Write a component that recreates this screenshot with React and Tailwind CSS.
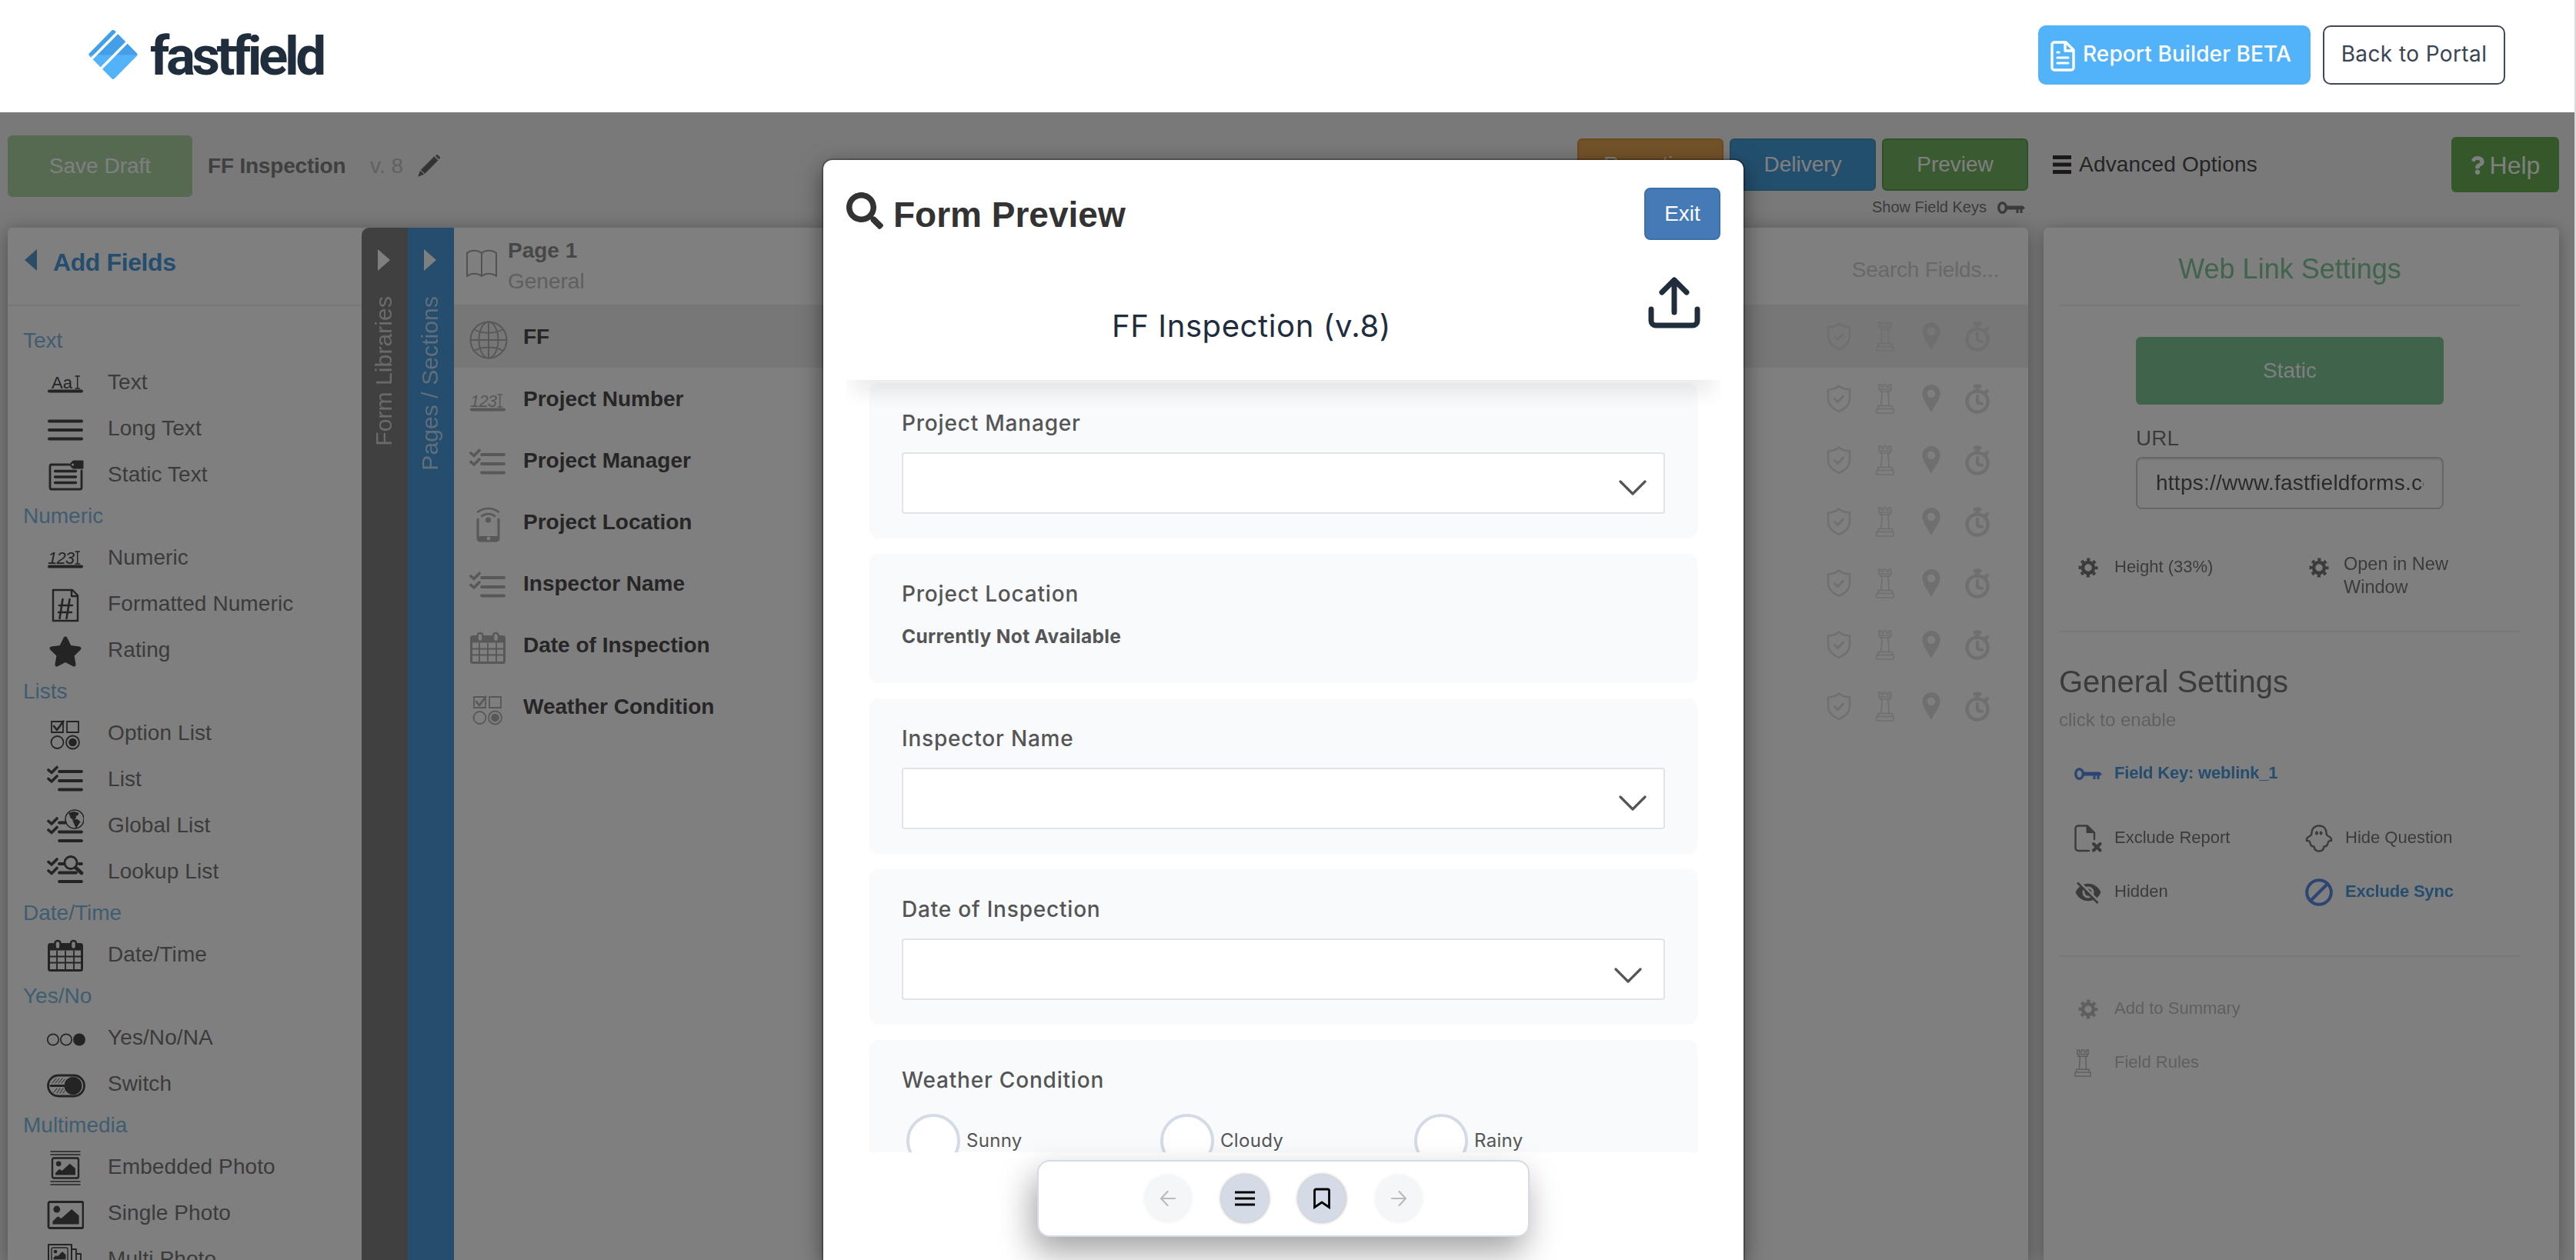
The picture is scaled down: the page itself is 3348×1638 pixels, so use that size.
import React from "react";
import { FaSearch, FaQuestion, FaStar } from "react-icons/fa";
import { MdVisibilityOff } from "react-icons/md";

const Svg = ({ w = 48, h = 48, box, className = "", children }) => (
    <svg width={w} height={h} viewBox={box || `0 0 ${w} ${h}`} className={`shrink-0 ${className}`} fill="none" stroke="currentColor" strokeLinecap="round" strokeLinejoin="round">
        {children}
    </svg>
);

const Cursor = () => <path d="M37 14h2.500M42.500 14H40M39.700 14v15M37 30h2.500M42.500 30H40" strokeWidth="1.500" />;

const Checks = ({ y = 0 }) => (
    <g transform={`translate(0 ${y})`}>
        <path d="M2 10l4 3.500L13 6.500M2 21.500l4 3.500 7-7" strokeWidth="3.600" />
    </g>
);

const Photo = ({ x, y, w, h, s = 3 }) => (
    <g transform={`translate(${x} ${y})`}>
        <rect width={w} height={h} rx="2" strokeWidth={s} />
        <circle cx={w * 0.24} cy={h * 0.28} r={h * 0.13} fill="currentColor" stroke="none" />
        <path d={`M${w * 0.12} ${h * 0.85}V${h * 0.74}L${w * 0.27} ${h * 0.55}l${w * 0.1} ${h * 0.08}L${w * 0.67} ${h * 0.28}L${w * 0.88} ${h * 0.52}V${h * 0.85}z`} fill="currentColor" stroke="none" />
    </g>
);

// iconos de los tipos de campo
const icons = {
    text: (
        <Svg>
            <text x="6" y="29.500" fontSize="22" fill="currentColor" stroke="none" className="font-['Liberation_Sans',Arial,sans-serif]">Aa</text>
            <Cursor />
            <path d="M3 33.500h42" strokeWidth="4" />
        </Svg>
    ),
    longText: (
        <Svg><path d="M3 12.500h42M3 24h42M3 35.500h42" strokeWidth="4" /></Svg>
    ),
    staticText: (
        <Svg>
            <path d="M28 9H6a2 2 0 0 0-2 2v28a2 2 0 0 0 2 2h37a2 2 0 0 0 2-2V17" strokeWidth="2.800" />
            <path d="M10.500 17.500h27M10.500 25h27M10.500 32.500h27" strokeWidth="3.400" />
            <path d="M29 9l5-5h13v10H34z" fill="currentColor" strokeWidth="1" />
            <circle cx="33.500" cy="9" r="1.500" fill="#fff" stroke="none" />
        </Svg>
    ),
    numeric: (
        <Svg>
            <text x="1" y="29.500" fontSize="22" fontStyle="italic" textLength="35" fill="currentColor" stroke="none" className="font-['Liberation_Sans',Arial,sans-serif]">123</text>
            <Cursor />
            <path d="M3 33.500h42" strokeWidth="4" />
        </Svg>
    ),
    formatted: (
        <Svg>
            <path d="M8 4h25l7 7v33H8z" strokeWidth="2.400" strokeLinejoin="miter" />
            <path d="M32 4v8h8" strokeWidth="2.400" />
            <path d="M20.500 16l-4 25M29.500 16l-4 25M16 24h17M15 33h17" strokeWidth="2.600" />
        </Svg>
    ),
    rating: <FaStar className="mx-[2px] size-[44px]" />,
    option: (
        <Svg>
            <path d="M6 7h15v14H6zM26 7h15v14H26z" strokeWidth="1.800" strokeLinejoin="miter" />
            <path d="M9 13l4 5 8.500-11.500" strokeWidth="2.600" />
            <circle cx="13.500" cy="34" r="8" strokeWidth="1.800" />
            <circle cx="33.500" cy="34" r="8.500" strokeWidth="1.800" />
            <circle cx="33.500" cy="34" r="5.300" fill="currentColor" stroke="none" />
        </Svg>
    ),
    list: (
        <Svg>
            <Checks />
            <path d="M16 12h29M16 24h29M16 35.500h29" strokeWidth="3.800" />
        </Svg>
    ),
    globalList: (
        <Svg>
            <Checks y={6.500} />
            <path d="M16 18.500h8M16 30.500h29M16 42h29" strokeWidth="3.800" />
            <circle cx="36" cy="14" r="12" strokeWidth="1.600" />
            <path d="M29 6l6-1.500 6 1.500-1 2.500-3 1 .5 3-3 2-3-2zM34 15l6-.500 3 3-2.500 3.500-2.500 4-2-4.500z" fill="currentColor" strokeWidth="1" />
        </Svg>
    ),
    lookup: (
        <Svg>
            <Checks y={-0.5} />
            <path d="M16 12h6M42 12h3M16 23.500h22M16 35h29" strokeWidth="3.800" />
            <circle cx="31" cy="10.500" r="8" strokeWidth="2.800" />
            <path d="M38 17.500l7 6.500" strokeWidth="4.600" />
        </Svg>
    ),
    date: (
        <Svg>
            <rect x="2.500" y="8.500" width="43" height="34" rx="2" strokeWidth="3" />
            <path d="M2.500 10h43v6.500h-43z" fill="currentColor" stroke="none" />
            <path d="M13 17.500v24M24 17.500v24M35 17.500v24M3 24.500h42M3 32.500h42" strokeWidth="1.800" />
            <rect x="10.500" y="4" width="7" height="11" rx="3.500" fill="#fff" strokeWidth="2.600" />
            <rect x="31" y="4" width="7" height="11" rx="3.500" fill="#fff" strokeWidth="2.600" />
        </Svg>
    ),
    yesNo: (
        <Svg w={50}>
            <circle cx="8" cy="24.500" r="7.200" strokeWidth="1.700" />
            <circle cx="25" cy="24.500" r="7.200" strokeWidth="1.700" />
            <circle cx="42" cy="24.500" r="8" fill="currentColor" stroke="none" />
        </Svg>
    ),
    toggle: (
        <Svg w={50}>
            <rect x="1.500" y="11" width="47" height="27" rx="13.500" strokeWidth="2.800" />
            <circle cx="34" cy="24.500" r="11.500" fill="currentColor" stroke="none" />
            <path d="M5 24.500h17" strokeWidth="3" />
            <path d="M7 21l5-6M11 21l5-6M15 21l5-6M19 21l4-5M9 33l4-5M13 34l4-6M17 34l4-6M21 34l2-3" strokeWidth="1" />
        </Svg>
    ),
    embedded: (
        <Svg>
            <path d="M5 2h38M5 6h38M5 41h38M5 45h38" strokeWidth="1.600" />
            <Photo x={7} y={10.5} w={34} h={26} s={2.4} />
        </Svg>
    ),
    photo: (
        <Svg><Photo x={2} y={7.500} w={45} h={34} s={2.800} /></Svg>
    ),
    multi: (
        <Svg>
            <rect x="2" y="3" width="30" height="32" strokeWidth="2" />
            <Photo x={6} y={7} w={21} h={18} s={1.4} />
            <path d="M33 9h5v30M39 15h5v24" strokeWidth="1.800" />
        </Svg>
    ),
    globe: (
        <Svg w={50} h={50}>
            <circle cx="25" cy="25" r="23.500" strokeWidth="2" />
            <ellipse cx="25" cy="25" rx="12.500" ry="23.500" strokeWidth="2" />
            <path d="M25 2v46M2 25h46M7 11.500c9 5.500 27 5.500 36 0M7 38.500c9-5.500 27-5.500 36 0" strokeWidth="2" />
        </Svg>
    ),
    location: (
        <Svg>
            <path d="M11 16v25a3 3 0 0 0 3 3h21a3 3 0 0 0 3-3V16" strokeWidth="3" />
            <path d="M11 38h27v6H11z" fill="currentColor" stroke="none" />
            <circle cx="25" cy="41" r="2.300" fill="#fff" stroke="none" />
            <circle cx="24.500" cy="17" r="3.600" fill="currentColor" stroke="none" />
            <path d="M11 6.500c8-6 19-6 27 0M16 12c5-4 12-4 17 0" strokeWidth="2.600" />
        </Svg>
    ),
};

const Rook = ({ w = 24, h = 39 }) => (
    <Svg w={w} h={h} box="0 0 24 39">
        <path d="M4 1h3v3h3V1h4v3h3V1h3v6H4zM5.500 7h13v3h-13zM8 10.500L7 28M16 10.500L17 28M3 28.500h18v4H3zM1 32.500h22V38H1z" strokeWidth="1.600" strokeLinejoin="miter" />
    </Svg>
);

const KeyIcon = ({ className = "" }) => (
    <Svg w={36} h={17} className={className}>
        <ellipse cx="6.500" cy="8" rx="4.800" ry="6.300" strokeWidth="3.400" />
        <path d="M12 6h21l2.500 2.500L33 10H12z" fill="currentColor" strokeWidth="1" />
        <path d="M26 10v5M31 10v5" strokeWidth="3" strokeLinecap="butt" />
    </Svg>
);

const Gear = () => (
    <Svg w={26} h={26}>
        <circle cx="13" cy="13" r="7" strokeWidth="4.500" />
        <circle cx="13" cy="13" r="10.700" strokeWidth="3.600" strokeLinecap="butt" strokeDasharray="4.200 4.203" strokeDashoffset="2.100" />
    </Svg>
);

const Triangle = ({ left, className }) => (
    <svg width="16" height="28" viewBox="0 0 16 28" className={className} fill="currentColor">
        <path d={left ? "M16 0v28L0 14z" : "M0 0v28l16-14z"} />
    </svg>
);

const groups = [
    { title: "Text", items: [["text", "Text"], ["longText", "Long Text"], ["staticText", "Static Text"]] },
    { title: "Numeric", items: [["numeric", "Numeric"], ["formatted", "Formatted Numeric"], ["rating", "Rating"]] },
    { title: "Lists", items: [["option", "Option List"], ["list", "List"], ["globalList", "Global List"], ["lookup", "Lookup List"]] },
    { title: "Date/Time", items: [["date", "Date/Time"]] },
    { title: "Yes/No", items: [["yesNo", "Yes/No/NA"], ["toggle", "Switch"]] },
    { title: "Multimedia", items: [["embedded", "Embedded Photo"], ["photo", "Single Photo"], ["multi", "Multi Photo"]] },
];

const fields = [
    ["globe", "FF"],
    ["numeric", "Project Number"],
    ["list", "Project Manager"],
    ["location", "Project Location"],
    ["list", "Inspector Name"],
    ["date", "Date of Inspection"],
    ["option", "Weather Condition"],
];

const Header = () => (
    <header className="flex h-[146px] shrink-0 items-start bg-white pl-[114px] pr-[90px] font-[Inter,sans-serif] text-[28px]">
        <svg width="66" height="68" viewBox="0 0 66 68" className="mt-[37px]">
            <path d="M2.500 32L31 3a3 3 0 0 1 4 0l28.500 29a2.500 2.500 0 0 1 0 4L35 65a3 3 0 0 1-4 0L2.500 36a2.500 2.500 0 0 1 0-4z" fill="#52b3fb" />
            <path d="M1.500 34.500c0-1 .3-1.700 1-2.500L31 3a3 3 0 0 1 4 0l28.500 29c.7.800 1 1.500 1 2.500z" fill="#429fe8" />
            <path d="M4 40.500L41 3M16 53.500L54 15" stroke="#fff" strokeWidth="3.400" />
        </svg>
        <span className="ml-[15px] mt-[31px] font-[Roboto,sans-serif] text-[71px] font-bold leading-[84px] tracking-[-4.500px] text-[#202d3c]">fastfield</span>
        <div className="ml-auto mt-[33px] flex gap-[16px]">
            <button className="flex h-[77px] w-[354px] items-center rounded-[10px] bg-[#52b3fb] pl-[15px] text-white">
                <Svg w={34} h={40} className="mt-[2px]">
                    <path d="M6 2h15l10 10v23a3 3 0 0 1-3 3H6a3 3 0 0 1-3-3V5a3 3 0 0 1 3-3zM20 3v10h10" strokeWidth="3.400" />
                    <path d="M10 15h2M10 22h14M10 29h14" strokeWidth="3.200" />
                </Svg>
                <span className="ml-[9px] whitespace-nowrap pb-[4px] font-medium tracking-[0.100px]">Report Builder BETA</span>
            </button>
            <button className="h-[77px] w-[237px] whitespace-nowrap rounded-[10px] border-2 border-[#3f4957] pb-[4px] tracking-[0.400px] text-[#3a4554]">Back to Portal</button>
        </div>
    </header>
);

const Toolbar = () => (
    <div className="flex h-[150px] shrink-0 items-start pl-[10px] pr-[20px]">
        <button className="mt-[30px] h-[80px] w-[240px] rounded-[6px] bg-[#acd4a4] text-white">Save Draft</button>
        <div className="mt-[30px] flex h-[80px] items-center pl-[20px]">
            <span className="w-[211px] font-bold tracking-[-0.200px] text-[#808080]">FF Inspection</span>
            <span className="w-[62px] text-[#c2c2c2]">v. 8</span>
            <Svg w={30} h={30} className="mb-[2px] text-[#666]">
                <path d="M21.500 4L26 8.500 9 25.500 4.500 21zM23.500 2.500L25 1l4 4-1.500 1.500zM3.500 22.500L7.500 26.500 1 29z" fill="currentColor" strokeWidth="0.800" />
            </Svg>
        </div>
        <div className="ml-auto mt-[34px] w-[586px]">
            <div className="flex justify-between text-white">
                <button className="h-[68px] w-[190px] rounded-[6px] border-2 border-[#d9953a] bg-[#e4a452]">Reporting</button>
                <button className="h-[68px] w-[190px] rounded-[6px] border-2 border-[#3f96b8] bg-[#469fdc]">Delivery</button>
                <button className="h-[68px] w-[190px] rounded-[6px] border-2 border-[#60a04c] bg-[#74b464]">Preview</button>
            </div>
            <div className="flex items-center justify-end gap-[14px] pr-[4px] pt-[6px] text-[#777]">
                <span className="text-[20px] leading-[30px]">Show Field Keys</span>
                <KeyIcon className="mt-[2px]" />
            </div>
        </div>
        <div className="ml-[32px] mt-[50px] flex h-[36px] w-[518px] items-center gap-[10px] text-[#4a4a4a]">
            <Svg w={24} h={24} className="text-[#333]">
                <path d="M0 2.500h24M0 12h24M0 21.500h24" strokeWidth="5" strokeLinecap="butt" />
            </Svg>
            <span className="tracking-[0.200px]">Advanced Options</span>
        </div>
        <button className="mt-[32px] flex h-[72px] w-[140px] items-center justify-center gap-[4px] rounded-[6px] bg-[#68b054] pr-[3px] pt-[2px] text-[32px] text-white">
            <FaQuestion className="size-[24px]" />
            <span>Help</span>
        </button>
    </div>
);

const AddFields = () => (
    <aside className="w-[460px] shrink-0 rounded-tl-[6px] bg-white">
        <div className="flex h-[102px] items-start border-b-2 border-[#eee] pl-[22px] pt-[28px] text-[#4a9bdc]">
            <Triangle left className="text-[#5898cc]" />
            <span className="ml-[21px] mt-[1px] text-[32px] font-bold leading-[32px] tracking-[-0.400px]">Add Fields</span>
        </div>
        <div className="pt-[20px]">
            {groups.map((group) => (
                <div key={group.title}>
                    <div className="h-[48px] pl-[20px] leading-[49px] text-[#7fbbe2]">{group.title}</div>
                    {group.items.map(([icon, label]) => (
                        <div key={label} className="flex h-[60px] items-center pl-[51px]">
                            <span className="flex w-[79px] translate-y-[3px] text-[#484848]">{icons[icon]}</span>
                            <span className="pt-[2px] tracking-[0.100px] text-[#777]">{label}</span>
                        </div>
                    ))}
                </div>
            ))}
        </div>
    </aside>
);

const VerticalTab = ({ label, className }) => (
    <div className={`flex w-[60px] shrink-0 flex-col items-center pr-[2px] pt-[28px] ${className}`}>
        <Triangle className="text-white" />
        <span className="mt-[33px] rotate-180 whitespace-nowrap text-[30px] leading-[36px] tracking-[0.100px] [writing-mode:vertical-rl]">{label}</span>
    </div>
);

const RowTools = () => (
    <div className="ml-auto flex pr-[36px] text-[#dedede]">
        <span className="flex w-[60px] items-center justify-center">
            <Svg w={32} h={36}>
                <path d="M16 1.500c4 3.500 9 4.800 14 4.800v12c0 8-7 14-14 16.500-7-2.500-14-8.500-14-16.500v-12c5 0 10-1.300 14-4.800z" strokeWidth="2.400" />
                <path d="M10.500 18.500l4 4 7-7.500" strokeWidth="2.600" />
            </Svg>
        </span>
        <span className="flex w-[60px] items-center justify-center"><Rook /></span>
        <span className="flex w-[60px] items-center justify-center">
            <svg width="24" height="36" viewBox="0 0 24 36" fill="currentColor">
                <path fillRule="evenodd" d="M12 0a11.500 11.500 0 0 1 11.500 11.500C23.500 20 16 28 12 36 8 28 .5 20 .5 11.500A11.500 11.500 0 0 1 12 0zm0 6.500a5.200 5.200 0 1 0 0 10.400 5.200 5.200 0 0 0 0-10.400z" />
            </svg>
        </span>
        <span className="flex w-[60px] items-center justify-center">
            <Svg w={34} h={40}>
                <circle cx="17" cy="24" r="13.500" strokeWidth="4.600" />
                <path d="M14 4h6M17 5v5M28 12l1.500-1.500" strokeWidth="5" />
                <path d="M17 16.500v9l6 1.500" strokeWidth="4" />
            </Svg>
        </span>
    </div>
);

const FieldList = () => (
    <main className="w-[2046px] shrink-0 rounded-tr-[6px] bg-white">
        <div className="flex h-[100px] items-start pl-[16px] pr-[38px]">
            <Svg w={40} h={36} className="mt-[28px] text-[#a4a4a4]">
                <path d="M20 5C15 .5 6 .5 1 5v30c5-4.500 14-4.500 19 0 5-4.500 14-4.500 19 0V5C34 .5 25 .5 20 5zM20 5v30" strokeWidth="2" />
            </Svg>
            <div className="ml-[14px] mt-[10px] leading-[40px]">
                <div className="font-bold text-[#8f8f8f]">Page 1</div>
                <div className="text-[#c0c0c0]">General</div>
            </div>
            <span className="ml-auto mt-[35px] leading-[40px] tracking-[-0.200px] text-[#d0d0d0]">Search Fields...</span>
        </div>
        {fields.map(([icon, label], i) => (
            <div key={label} className={`flex items-center pl-[20px] ${i === 0 ? "h-[82px] bg-[#efefef]" : "h-[80px]"}`}>
                <span className="flex w-[70px] translate-y-[5px] text-[#b0b0b0]">{icons[icon]}</span>
                <span className="pt-[2px] font-bold text-[#4c4c4c]">{label}</span>
                <RowTools />
            </div>
        ))}
    </main>
);

const Setting = ({ icon, label, className = "", width = "w-[300px]" }) => (
    <div className={`flex ${width} items-center pl-[20px] text-[22px] ${className}`}>
        <span className="mr-[16px] flex w-[36px] shrink-0 translate-y-[2px] justify-center">{icon}</span>
        <span>{label}</span>
    </div>
);

const Settings = () => (
    <aside className="ml-[20px] w-[670px] shrink-0 rounded-t-[6px] bg-white pl-[20px] pr-[50px] text-[#777]">
        <h2 className="h-[102px] border-b-2 border-[#eee] pt-[30px] text-center text-[36px] leading-[48px] text-[#80c898]">Web Link Settings</h2>
        <div className="mx-auto flex w-[400px] flex-col pt-[40px]">
            <button className="h-[88px] rounded-[6px] bg-[#80c698] text-white">Static</button>
            <label className="mt-[26px] leading-[36px]">URL</label>
            <input readOnly value="https://www.fastfieldforms.com" className="mt-[6px] h-[68px] rounded-[8px] border-2 border-[#ccc] px-[24px] tracking-[0.250px] text-[#555] shadow-[inset_0_2px_2px_rgba(0,0,0,0.08)]" />
        </div>
        <div className="mt-[58px] flex h-[100px] items-start">
            <Setting icon={<Gear />} label="Height (33%)" className="h-[32px]" />
            <div className="flex w-[300px] pl-[20px]">
                <span className="mt-[5px] flex w-[36px] shrink-0 justify-center"><Gear /></span>
                <span className="ml-[14px] mt-[-2px] w-[160px] text-[23.500px] leading-[30px]">Open in New Window</span>
            </div>
        </div>
        <div className="border-b-2 border-[#eee]" />
        <h2 className="mt-[39px] text-[40px] leading-[50px]">General Settings</h2>
        <div className="mt-[9px] text-[24px] leading-[32px] text-[#c0c0c0]">click to enable</div>
        <div className="mt-[24px] flex h-[56px] items-center">
            <Setting icon={<KeyIcon className="text-[#5a8ae6]" />} label="Field Key: weblink_1" width="w-[400px]" className="font-bold tracking-[-0.200px] text-[#4a9bdc]" />
        </div>
        <div className="mt-[21px] flex flex-wrap">
            <Setting
                className="h-[70px]"
                label="Exclude Report"
                icon={
                    <Svg w={36} h={36}>
                        <path d="M19 34H5a3.500 3.500 0 0 1-3.500-3.500V5A3.500 3.500 0 0 1 5 1.500h12l9 9V19" strokeWidth="2.400" />
                        <path d="M16 1.500v9h10z" fill="currentColor" strokeWidth="1" />
                        <path d="M25 25l8.500 8.500M33.500 25L25 33.500" strokeWidth="4" />
                    </Svg>
                }
            />
            <Setting
                className="h-[70px]"
                label="Hide Question"
                icon={
                    <Svg w={36} h={36}>
                        <path d="M18 1.500c6 0 9.500 4 9.500 9.500 0 2 1 3.500 3.500 4.500 3 1.300 3.500 3 3 5.500-2.500-.5-4 .5-4.500 3-.5 3-2 4.500-5 4.500-.5 4-3 6-6.500 6s-6-2-6.500-6c-3 0-4.500-1.500-5-4.500-.5-2.500-2-3.500-4.500-3-.5-2.500 0-4.200 3-5.500 2.500-1 3.500-2.500 3.500-4.500 0-5.500 3.500-9.500 9.500-9.500z" strokeWidth="2.400" />
                        <ellipse cx="15" cy="11" rx="1.500" ry="2.200" fill="currentColor" />
                        <ellipse cx="20.500" cy="11" rx="1.500" ry="2.200" fill="currentColor" />
                    </Svg>
                }
            />
            <Setting className="h-[70px]" label="Hidden" icon={<MdVisibilityOff className="size-[36px]" />} />
            <Setting
                className="h-[70px] font-bold tracking-[-0.200px] text-[#4a9bdc]"
                label="Exclude Sync"
                icon={
                    <Svg w={36} h={36} className="text-[#5a8ae6]">
                        <circle cx="18" cy="18" r="15.800" strokeWidth="4" />
                        <path d="M28.500 7.500l-21 21" strokeWidth="4" />
                    </Svg>
                }
            />
        </div>
        <div className="mt-[49px] border-b-2 border-[#eee]" />
        <div className="mt-[31px] text-[#bebebe]">
            <Setting className="h-[70px]" label="Add to Summary" icon={<Gear />} />
            <Setting className="h-[70px]" label="Field Rules" icon={<span className="mr-auto"><Rook w={22} h={36} /></span>} />
        </div>
    </aside>
);

const Select = ({ date }) => (
    <div className={`mt-[15px] flex h-[80px] items-center justify-end rounded-[4px] border-2 border-[#e0e3ea] bg-white ${date ? "pr-[28px] pt-[18px]" : "pr-[22px] pt-[14px]"}`}>
        <Svg w={36} h={20} className="mb-[2px] text-[#555]">
            <path d="M2 2l16 16L34 2" strokeWidth="3.200" />
        </Svg>
    </div>
);

const Card = ({ label, className, children }) => (
    <section className={`mb-[20px] shrink-0 rounded-[12px] bg-[#f8fafc] px-[42px] pt-[29px] ${className}`}>
        <div className="text-[28px] font-medium leading-[46px] tracking-[0.800px] text-[#555]">{label}</div>
        {children}
    </section>
);

const NavButton = ({ disabled, children }) => (
    <button className={`flex size-[62px] items-center justify-center rounded-full ${disabled ? "bg-[#f5f6f8] text-[#bbb] shadow-[0_0_4px_rgba(0,0,0,0.06)]" : "bg-[#d5dbe6] text-black shadow-[0_0_4px_rgba(0,0,0,0.4)]"}`}>
        {children}
    </button>
);

const FormPreview = () => (
    <div className="absolute left-[1070px] top-[208px] h-[1430px] w-[1196px] rounded-t-[12px] bg-white px-[30px] shadow-[0_0_0_2px_rgba(0,0,0,0.25),0_10px_30px_rgba(0,0,0,0.5)]">
        <div className="flex h-[140px] items-start pt-[36px]">
            <FaSearch className="mt-[6px] size-[48px] text-[#333]" />
            <h1 className="ml-[13px] mt-[3px] whitespace-nowrap text-[46px] font-bold leading-[64px] text-[#333]">Form Preview</h1>
            <button className="ml-auto h-[68px] w-[99px] rounded-[8px] border-2 border-[#3d70a9] bg-[#447ab5] text-white">Exit</button>
        </div>
        <div className="relative z-10 flex h-[146px] items-start justify-end pr-[24px] font-[Inter,sans-serif]">
            <div className="mr-[332px] mt-[46px] whitespace-nowrap text-[40px] leading-[60px] tracking-[0.600px] text-[#1f2d3d]">FF Inspection (v.8)</div>
            <Svg w={72} h={72} className="mt-[10px] text-[#202d3c]">
                <path d="M36 48V6M20 22L36 6l16 16M6 44v15a6 6 0 0 0 6 6h48a6 6 0 0 0 6-6V44" strokeWidth="7" />
            </Svg>
        </div>
        <div className="relative h-[1004px] overflow-hidden px-[30px] pt-[4px] font-[Inter,sans-serif]">
            <div className="absolute inset-x-[10px] top-[-20px] z-10 h-[20px] shadow-[0_10px_30px_rgba(0,0,0,0.14)]" />
            <Card label="Project Manager" className="h-[202px]"><Select /></Card>
            <Card label="Project Location" className="h-[168px]">
                <div className="mt-[14px] text-[24.500px] font-bold leading-[36px] tracking-[0.350px] text-[#555]">Currently Not Available</div>
            </Card>
            <Card label="Inspector Name" className="h-[202px]"><Select /></Card>
            <Card label="Date of Inspection" className="h-[202px]"><Select date /></Card>
            <Card label="Weather Condition" className="h-[300px]">
                <div className="mt-[21px] flex pl-[6px] text-[24px] tracking-[0.300px] text-[#555]">
                    {["Sunny", "Cloudy", "Rainy"].map((option) => (
                        <div key={option} className="flex w-[330px] shrink-0 items-center gap-[8px]">
                            <span className="size-[70px] rounded-full border-4 border-[#d5dbe6] bg-white" />
                            <span>{option}</span>
                        </div>
                    ))}
                </div>
            </Card>
        </div>
        <div className="absolute left-[278px] top-[1300px] z-20 flex h-[100px] w-[640px] items-center justify-center gap-[38px] rounded-[16px] border-2 border-[#d5dbe6] bg-white shadow-[-6px_20px_44px_rgba(0,0,0,0.36)]">
            <NavButton disabled>
                <Svg w={22} h={22}><path d="M20 11H2M10.500 2L2 11l8.500 9" strokeWidth="2.200" /></Svg>
            </NavButton>
            <NavButton>
                <Svg w={28} h={22}><path d="M1 3h26M1 11h26M1 19h26" strokeWidth="2.800" strokeLinecap="butt" /></Svg>
            </NavButton>
            <NavButton>
                <Svg w={24} h={28}><path d="M2.500 25.500V4a2 2 0 0 1 2-2h15a2 2 0 0 1 2 2v21.500L12 19z" strokeWidth="2.800" strokeLinejoin="miter" /></Svg>
            </NavButton>
            <NavButton disabled>
                <Svg w={22} h={22}><path d="M2 11h18M11.500 2l8.500 9-8.500 9" strokeWidth="2.200" /></Svg>
            </NavButton>
        </div>
    </div>
);

export const App = () => {
    return (
        <div className="relative flex h-[1638px] w-[3348px] flex-col overflow-hidden border-r-2 border-[#d9d9d9] bg-[#f2f2f2] font-['Liberation_Sans',Arial,sans-serif] text-[28px]">
            <Header />
            <Toolbar />
            <div className="flex h-[1342px] pl-[10px]">
                <div className="flex rounded-t-[6px] shadow-[0_4px_24px_rgba(0,0,0,0.35)]">
                    <AddFields />
                    <VerticalTab label="Form Libraries" className="rounded-tl-[10px] bg-[#808080] text-[#d5d5d5]" />
                    <VerticalTab label="Pages / Sections" className="bg-[#4a9bdc] text-[#c0dcf4]" />
                    <FieldList />
                </div>
                <div className="flex [filter:drop-shadow(0_4px_10px_rgba(0,0,0,0.3))]"><Settings /></div>
            </div>
            {/* fondo oscuro detras del modal */}
            <div className="absolute inset-x-0 bottom-0 top-[146px] bg-black/50" />
            <FormPreview />
        </div>
    );
};

export default App;
